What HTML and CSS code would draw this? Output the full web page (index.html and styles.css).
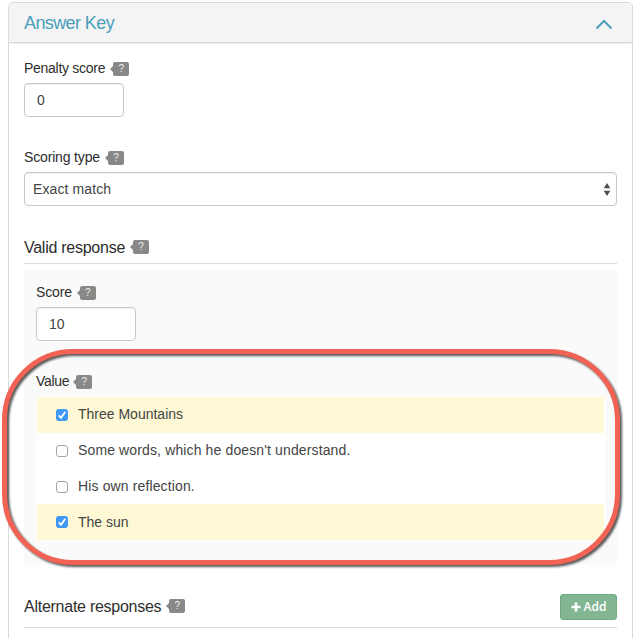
FILE: index.html
```html
<!DOCTYPE html>
<html lang="en">
<head>
<meta charset="utf-8">
<title>Answer Key</title>
<link rel="stylesheet" href="styles.css">
</head>
<body>
<section class="panel">
  <header class="panel-head">
    <h1>Answer Key</h1>
    <svg class="chevron" width="18" height="11" viewBox="0 0 18 11"><path d="M1.500 9.500 9 2l7.500 7.500" fill="none" stroke="#4a9ebc" stroke-width="2"/></svg>
  </header>
  <div class="panel-body">
    <div class="field">
      <div class="label"><span class="tight">Penalty score</span><span class="help">?</span></div>
      <div class="input">0</div>
    </div>
    <div class="field scoring">
      <div class="label"><span class="normal">Scoring type</span><span class="help">?</span></div>
      <div class="select"><span class="selected">Exact match</span>
        <svg width="8" height="13" viewBox="0 0 8 13"><path d="M4 0 7.300 5.300H.7zM4 13 .7 7.700h6.600z" fill="#505050"/></svg>
      </div>
    </div>
    <div class="section-title valid"><h2>Valid response</h2><span class="help">?</span></div>
    <div class="response">
      <div class="label"><span class="normal">Score</span><span class="help">?</span></div>
      <div class="input">10</div>
      <div class="label value-label"><span class="tight">Value</span><span class="help">?</span></div>
      <div class="options">
        <div class="option chosen"><span class="check on"><svg width="12" height="12" viewBox="0 0 12 12"><path d="m2.700 6.300 2.300 2.500 4.300-6" fill="none" stroke="#fff" stroke-width="1.800"/></svg></span><span>Three Mountains</span></div>
        <div class="option wide"><span class="check"></span><span>Some words, which he doesn't understand.</span></div>
        <div class="option wide"><span class="check"></span><span>His own reflection.</span></div>
        <div class="option chosen last"><span class="check on"><svg width="12" height="12" viewBox="0 0 12 12"><path d="m2.700 6.300 2.300 2.500 4.300-6" fill="none" stroke="#fff" stroke-width="1.800"/></svg></span><span>The sun</span></div>
      </div>
    </div>
    <div class="section-title alternate"><h2>Alternate responses</h2><span class="help">?</span>
      <div class="add"><svg width="10" height="10" viewBox="0 0 10 10"><path d="M5 .5v9M.5 5h9" stroke="#fff" stroke-width="2.600"/></svg><span>Add</span></div>
    </div>
  </div>
</section>
<div class="highlight"></div>
</body>
</html>
```
FILE: styles.css
```css
* { box-sizing: border-box; }
body {
  margin: 0;
  padding: 2px 6px 0 8px;
  height: 638px;
  overflow: hidden;
  background: #fff;
  color: #2d2d2d;
  font: 14px/20px "Liberation Sans", Arial, sans-serif;
}
h1, h2 { margin: 0; font-weight: 400; }
.panel {
  height: 660px;
  border: 1px solid #d9d9d9;
  border-radius: 5px;
}
.panel-head {
  display: flex;
  align-items: center;
  justify-content: space-between;
  height: 40px;
  padding: 0 19px 0 15px;
  background: #f4f4f4;
  border-bottom: 1px solid #d9d9d9;
  border-radius: 4px 4px 0 0;
  box-shadow: 0 1px 1px #eee;
}
h1 { font-size: 18px; letter-spacing: -.6px; color: #4a9ebc; }
.chevron { margin-top: 4px; }
.panel-body { padding: 15px 15px 0; }
.field { height: 89px; }
.label { display: flex; align-items: center; height: 25px; padding-bottom: 5px; }
.tight { letter-spacing: -.28px; }
.normal { letter-spacing: -.16px; }
.help {
  position: relative;
  width: 16px;
  height: 14px;
  margin: 2px 0 0 8px;
  border-radius: 2px;
  background: #888;
  color: #eee;
  font-size: 10px;
  line-height: 14px;
  text-align: center;
}
.help::before {
  content: "";
  position: absolute;
  left: -3px;
  top: 4px;
  border: solid transparent;
  border-width: 3px 3px 3px 0;
  border-right-color: #888;
}
.input {
  width: 100px;
  height: 34px;
  padding: 6px 12px;
  border: 1px solid #c8c8c8;
  border-radius: 4px;
  background: #fff;
  box-shadow: inset 0 1px 1px #eee;
  color: #444;
}
.select {
  display: flex;
  align-items: center;
  justify-content: space-between;
  height: 34px;
  padding: 0 5px 0 8px;
  border: 1px solid #c8c8c8;
  border-radius: 4px;
  box-shadow: inset 0 1px 1px #eee;
  color: #444;
}
.selected { letter-spacing: .1px; }
.section-title {
  display: flex;
  align-items: center;
  height: 28px;
  padding-bottom: 5px;
  border-bottom: 1px solid #d9d9d9;
}
h2 { font-size: 16px; letter-spacing: -.26px; }
.section-title .help { margin-top: 0; }
.valid h2 { padding-top: 2px; }
.response {
  height: 295px;
  margin-top: 6px;
  padding: 12px;
  border-radius: 4px;
  background: #fafafa;
}
.value-label { margin-top: 30px; }
.value-label .help { margin-left: 7px; }
.options {
  display: grid;
  grid-template-rows: 36px 36px 35px 36px;
  border: 1px solid #fff;
  background: #fff;
}
.option {
  display: flex;
  align-items: center;
  gap: 10px;
  padding: 0 19px 2px;
  color: #444;
}
.wide { letter-spacing: .13px; }
.chosen { background: #fef9d4; }
.last { padding-bottom: 0; }
.check {
  width: 12px;
  height: 12px;
  margin-top: 2px;
  border: 1px solid #a5a5a5;
  border-radius: 3px;
  background: #fff;
}
.check.on { border: 0; background: #3f97f6; }
.last .check { margin-top: 0; }
.check svg { display: block; }
.alternate { height: 34px; margin-top: 29px; padding-bottom: 7px; }
.alternate .help { margin-top: -3px; }
.add {
  display: flex;
  align-items: center;
  justify-content: center;
  gap: 3px;
  width: 57px;
  height: 26px;
  margin-left: auto;
  border: 1px solid #70ab84;
  border-radius: 3px;
  background: #82b693;
  color: #fff;
  font: 600 12px/18px "Open Sans", sans-serif;
}
.highlight {
  position: absolute;
  left: 2px;
  top: 349px;
  width: 618px;
  height: 216px;
  border: 5px solid #f26355;
  border-radius: 71px;
  filter: drop-shadow(2px 2.5px 1px rgba(0, 0, 0, .65));
}
```
